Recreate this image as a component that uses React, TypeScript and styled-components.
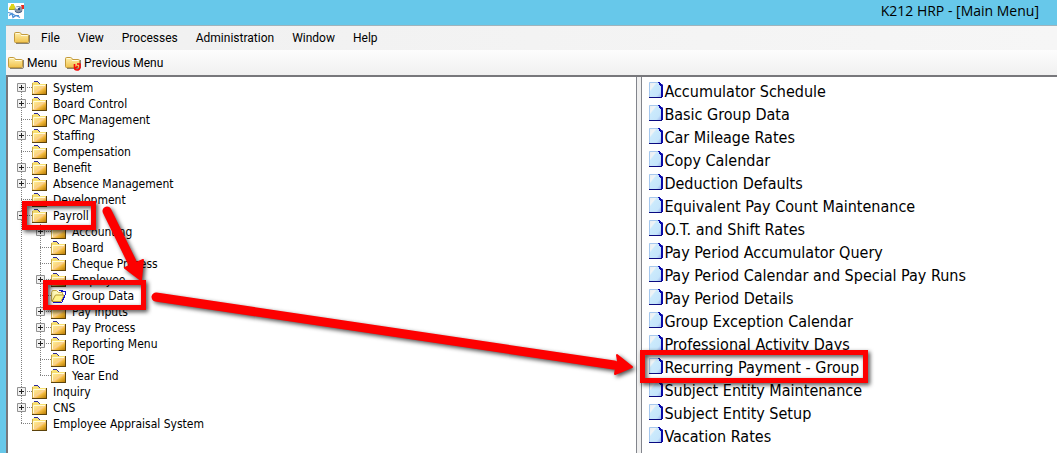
import React from "react";
import styled, { createGlobalStyle } from "styled-components";

const Global = createGlobalStyle`
  *, *::before, *::after { box-sizing: border-box; }
  html, body { margin: 0; padding: 0; }
  body { overflow: hidden; background: #67c8ea; color: #000; }
  button { font: inherit; color: inherit; border: 0; background: none; padding: 0; margin: 0; white-space: nowrap; }
  ul { list-style: none; margin: 0; padding: 0; }
`;

const Window = styled.div`
  position: relative;
  display: flex;
  flex-direction: column;
  min-height: 100vh;
  padding-left: 6px;
  background: #67c8ea;
  font-family: Roboto, "Open Sans", sans-serif;
`;

const TitleBar = styled.header`
  display: flex;
  align-items: center;
  justify-content: space-between;
  height: 25px;
  padding: 0 18px 4px 2px;
`;

const Title = styled.h1`
  margin: 0;
  font-family: "Open Sans", "Noto Sans", sans-serif;
  font-size: 14px;
  font-weight: 400;
  line-height: 20px;
`;

const MenuBar = styled.nav`
  display: flex;
  align-items: center;
  height: 25px;
  padding-left: 8px;
  border-top: 1px solid #9fb4bd;
  background: linear-gradient(90deg, #f0f0f0, #f6f6f6);
  font-size: 12px;
  line-height: 16px;
`;

const MenuItems = styled.ul`
  display: flex;
  gap: 18px;
  margin-left: 11px;
`;

const ToolBar = styled.div`
  display: flex;
  align-items: center;
  gap: 8px;
  height: 25px;
  padding-left: 2px;
  background: linear-gradient(#fdfdfd, #f0f0f0);
  font-size: 12px;
  line-height: 16px;
`;

const ToolButton = styled.button`
  display: flex;
  align-items: center;
  gap: 3px;
`;

const Workspace = styled.main`
  display: grid;
  grid-template-columns: 60fr 40fr;
  flex: 1;
  border-top: 2px solid #77777b;
  border-left: 2px solid #77777b;
  background: #fff;
`;

const Pane = styled.section`
  padding-top: 3px;
`;

const TreePane = styled(Pane)`
  padding-left: 9px;
  border-right: 1px solid #82858c;
  font: 12px/16px "DejaVu Sans Condensed", "Noto Sans", sans-serif;
`;

const ListPane = styled(Pane)`
  padding-left: 8px;
  border-left: 4px solid #f0f0f0;
  box-shadow: inset 1px 0 #82858c;
  font: 16px/23px "DejaVu Sans Condensed", "Noto Sans", sans-serif;
`;

const TreeRow = styled.li`
  display: flex;
  align-items: center;
  height: 16px;
`;

const dotsDown = "repeating-linear-gradient(#808080 0 1px, transparent 1px 2px)";
const dotsAcross = "repeating-linear-gradient(90deg, #808080 0 1px, transparent 1px 2px)";

const Guide = styled.span<{ $branch?: boolean; $end?: boolean; $start?: boolean }>`
  flex: none;
  width: ${(p) => (p.$branch ? 15 : 19)}px;
  height: 16px;
  padding-top: 3px;
  background-image: ${dotsDown}, ${dotsAcross};
  background-repeat: no-repeat;
  background-position: 4px ${(p) => (p.$start ? 8 : 0)}px, 4px 7px;
  background-size: 1px ${(p) => (p.$end ? 8 : 16)}px, ${(p) => (p.$branch ? 11 : 0)}px 1px;
`;

const Expander = styled.button`
  display: block;
  width: 9px;
  height: 9px;

  svg { display: block; }
`;

const TreeLabel = styled.button`
  display: flex;
  align-items: center;
  gap: 6px;
`;

const Entry = styled.button`
  display: flex;
  align-items: flex-start;
  gap: 1px;
  height: 23px;

  svg { margin-top: 2px; }
`;

const Annotations = styled.svg`
  position: absolute;
  top: 0;
  left: 0;
  pointer-events: none;
  filter: drop-shadow(2px 2px 2px rgba(0, 0, 0, 0.7));
`;

const AppIcon = () => (
  <svg width="16" height="16" viewBox="0 0 16 16" aria-hidden="true">
    <path fill="#fff" d="M0 0h16v16H0z" />
    <path fill="#dcd41c" d="M3 1h3v1l2 3v2H1V5l2-3z" />
    <path fill="#a9a51e" d="M1 6h7v1H1z" />
    <ellipse cx="10.500" cy="6.500" rx="4" ry="3.500" fill="#8795a8" />
    <path fill="none" stroke="#435f86" d="M7 8q3 3.500 7 0" />
    <path fill="#e3eaf2" d="M7 4h4v2H8z" />
    <path fill="#2c4c86" d="M10 5h2v2h-2z" />
    <path fill="#e62b20" d="M13 2h3v4h-2z" />
    <path fill="none" stroke="#4b8fd8" strokeWidth="1.200" d="M0 9.500l4 1 3 2 4 0M1 12.500l3-2 1 4 3-2 4 2" />
  </svg>
);

const MenuFolder = ({ back = false }: { back?: boolean }) => (
  <svg width="16" height="16" viewBox="0 0 16 16" aria-hidden="true">
    <defs>
      <linearGradient id="soft" x1="0" y1="0" x2="0" y2="1">
        <stop offset="0" stopColor="#fff0ae" />
        <stop offset="1" stopColor="#f0c24c" />
      </linearGradient>
    </defs>
    <path fill="none" stroke="#5e5238" strokeOpacity=".7" d="M2 13.500h12q1.500 0 1.500-1.500V5" />
    <path
      fill="url(#soft)"
      stroke="#c39a3c"
      d="M.5 11.500V3.500q0-1 1-1h4q1 0 1.500 1l.5 1h6q1 0 1 1v6q0 1-1 1h-12q-1 0-1-1z"
    />
    <path fill="none" stroke="#fffbe0" d="M2 3.500h3.500M7 5.500h6.500" />
    {back && (
      <path fill="none" stroke="#f50a0a" strokeWidth="1.600" d="M9.500 9v3.500q0 2.500 2.500 2.500t3-2.500V8.500M15.500 9h-3.500M9 12.500h2.500l1-1.500" />
    )}
  </svg>
);

const TreeFolder = () => (
  <svg width="15" height="14" viewBox="0 0 15 14" aria-hidden="true">
    <defs>
      <linearGradient id="gold" x1="0" y1="0" x2="1" y2="1">
        <stop offset="0" stopColor="#fff3a0" />
        <stop offset=".4" stopColor="#fbd67c" />
        <stop offset=".5" stopColor="#fbd092" />
        <stop offset=".65" stopColor="#f0b838" />
        <stop offset="1" stopColor="#b87c08" />
      </linearGradient>
    </defs>
    <path fill="#f8e070" d="M0 2l2-1h4l2 2h6v10H0z" />
    <path fill="none" stroke="#2a2a9c" d="M2 .5h4M6 1.500h1M7 2.500h1" />
    <path fill="url(#gold)" d="M1 4h13v9H1z" />
    <path fill="none" stroke="#c9a648" d="M.5 2v11" />
    <path fill="none" stroke="#5c430c" d="M0 13.500h15M14.500 3v10" />
    <path fill="none" stroke="#fffbd8" d="M1.500 12V4.500H13" />
  </svg>
);

const OpenFolder = () => (
  <svg width="15" height="14" viewBox="0 0 15 14" aria-hidden="true">
    <path fill="#fff9b8" stroke="#cdb050" d="M.5 12V3.500l1-2h4l2 2h4V6" />
    <path fill="#fff48c" stroke="#b89a30" d="M1 12.500L4.500 6H13l-3 6.500z" />
    <path fill="none" stroke="#1010c0" d="M8 1.500h4M10 2.500h5M14.500 3v3M13.500 6v3M12.500 8v3M11.500 10v3M2 13.500h9" />
  </svg>
);

const PageIcon = () => (
  <svg width="14" height="16" viewBox="0 0 14 16" aria-hidden="true">
    <defs>
      <linearGradient id="sheet" x1="0" y1="0" x2="1" y2="1">
        <stop offset="0" stopColor="#e6ecf0" />
        <stop offset=".3" stopColor="#f0f4f6" />
        <stop offset=".38" stopColor="#cbeafc" />
        <stop offset=".78" stopColor="#c5e5fb" />
        <stop offset="1" stopColor="#9db4ec" />
      </linearGradient>
    </defs>
    <path fill="url(#sheet)" d="M0 0h10l2 3v12H0z" />
    <path fill="none" stroke="#a6c8ee" d="M.5 15V.5H10" />
    <path fill="none" stroke="#0a0a80" d="M0 15.500h13" />
    <path fill="#0a0aa8" d="M9 0h2v1h1v1h1l1 1v12h-2V4h-1V3h-1V1H9z" />
  </svg>
);

const Toggle = ({ open, label }: { open?: boolean; label: string }) => (
  <Expander aria-label={`${open ? "Collapse" : "Expand"} ${label}`} aria-expanded={!!open}>
    <svg width="9" height="9" viewBox="0 0 9 9" aria-hidden="true">
      <path fill="#f1f1f1" stroke="#919191" d="M.5.5h8v8h-8z" />
      <path stroke="#222" d={open ? "M2 4.500h5" : "M2 4.500h5M4.500 2v5"} />
    </svg>
  </Expander>
);

type Node = { label: string; depth?: number; toggle?: "plus" | "minus"; end?: boolean; open?: boolean };

const tree: Node[] = [
  { label: "System", toggle: "plus" },
  { label: "Board Control", toggle: "plus" },
  { label: "OPC Management" },
  { label: "Staffing", toggle: "plus" },
  { label: "Compensation" },
  { label: "Benefit", toggle: "plus" },
  { label: "Absence Management", toggle: "plus" },
  { label: "Development" },
  { label: "Payroll", toggle: "minus" },
  { label: "Accounting", depth: 1, toggle: "plus" },
  { label: "Board", depth: 1 },
  { label: "Cheque Process", depth: 1 },
  { label: "Employee", depth: 1, toggle: "plus" },
  { label: "Group Data", depth: 1, open: true },
  { label: "Pay Inputs", depth: 1, toggle: "plus" },
  { label: "Pay Process", depth: 1, toggle: "plus" },
  { label: "Reporting Menu", depth: 1, toggle: "plus" },
  { label: "ROE", depth: 1 },
  { label: "Year End", depth: 1, end: true },
  { label: "Inquiry", toggle: "plus" },
  { label: "CNS", toggle: "plus" },
  { label: "Employee Appraisal System", end: true },
];

const entries = [
  "Accumulator Schedule",
  "Basic Group Data",
  "Car Mileage Rates",
  "Copy Calendar",
  "Deduction Defaults",
  "Equivalent Pay Count Maintenance",
  "O.T. and Shift Rates",
  "Pay Period Accumulator Query",
  "Pay Period Calendar and Special Pay Runs",
  "Pay Period Details",
  "Group Exception Calendar",
  "Professional Activity Days",
  "Recurring Payment - Group",
  "Subject Entity Maintenance",
  "Subject Entity Setup",
  "Vacation Rates",
];

const menus = ["File", "View", "Processes", "Administration", "Window", "Help"];

export default function App() {
  return (
    <>
      <Global />
      <Window>
        <TitleBar>
          <AppIcon />
          <Title>K212 HRP - [Main Menu]</Title>
        </TitleBar>
        <MenuBar>
          <MenuFolder />
          <MenuItems>
            {menus.map((m) => (
              <li key={m}>
                <button>{m}</button>
              </li>
            ))}
          </MenuItems>
        </MenuBar>
        <ToolBar>
          <ToolButton>
            <MenuFolder />
            Menu
          </ToolButton>
          <ToolButton>
            <MenuFolder back />
            Previous Menu
          </ToolButton>
        </ToolBar>
        <Workspace>
          <TreePane>
            <ul>
              {tree.map((n, i) => (
                <TreeRow key={n.label}>
                  {n.depth && <Guide />}
                  <Guide $branch $end={n.end} $start={i === 0}>
                    {n.toggle && <Toggle label={n.label} open={n.toggle === "minus"} />}
                  </Guide>
                  <TreeLabel>
                    {n.open ? <OpenFolder /> : <TreeFolder />}
                    {n.label}
                  </TreeLabel>
                </TreeRow>
              ))}
            </ul>
          </TreePane>
          <ListPane>
            <ul>
              {entries.map((label) => (
                <li key={label}>
                  <Entry>
                    <PageIcon />
                    {label}
                  </Entry>
                </li>
              ))}
            </ul>
          </ListPane>
        </Workspace>
        <Annotations width="900" height="453" viewBox="0 0 900 453" aria-hidden="true">
          <g fill="none" stroke="#fd0000" strokeWidth="5">
            <path d="M24.500 203.500h69v24h-69z" />
            <path d="M45.500 282.500h98v25h-98z" />
            <path d="M642.500 352.500h223v28h-223z" />
          </g>
          <g fill="none" stroke="#fd0000" strokeWidth="9" strokeLinecap="round">
            <path d="M107 211l25 51" />
            <path d="M156 297l458 68" />
          </g>
          <g fill="#fd0000" stroke="#fd0000" strokeWidth="2" strokeLinejoin="round">
            <path d="M141 280l2-20-18 8z" />
            <path d="M632 367l-15-12 1 6-2 7-1 6z" />
          </g>
        </Annotations>
      </Window>
    </>
  );
}
